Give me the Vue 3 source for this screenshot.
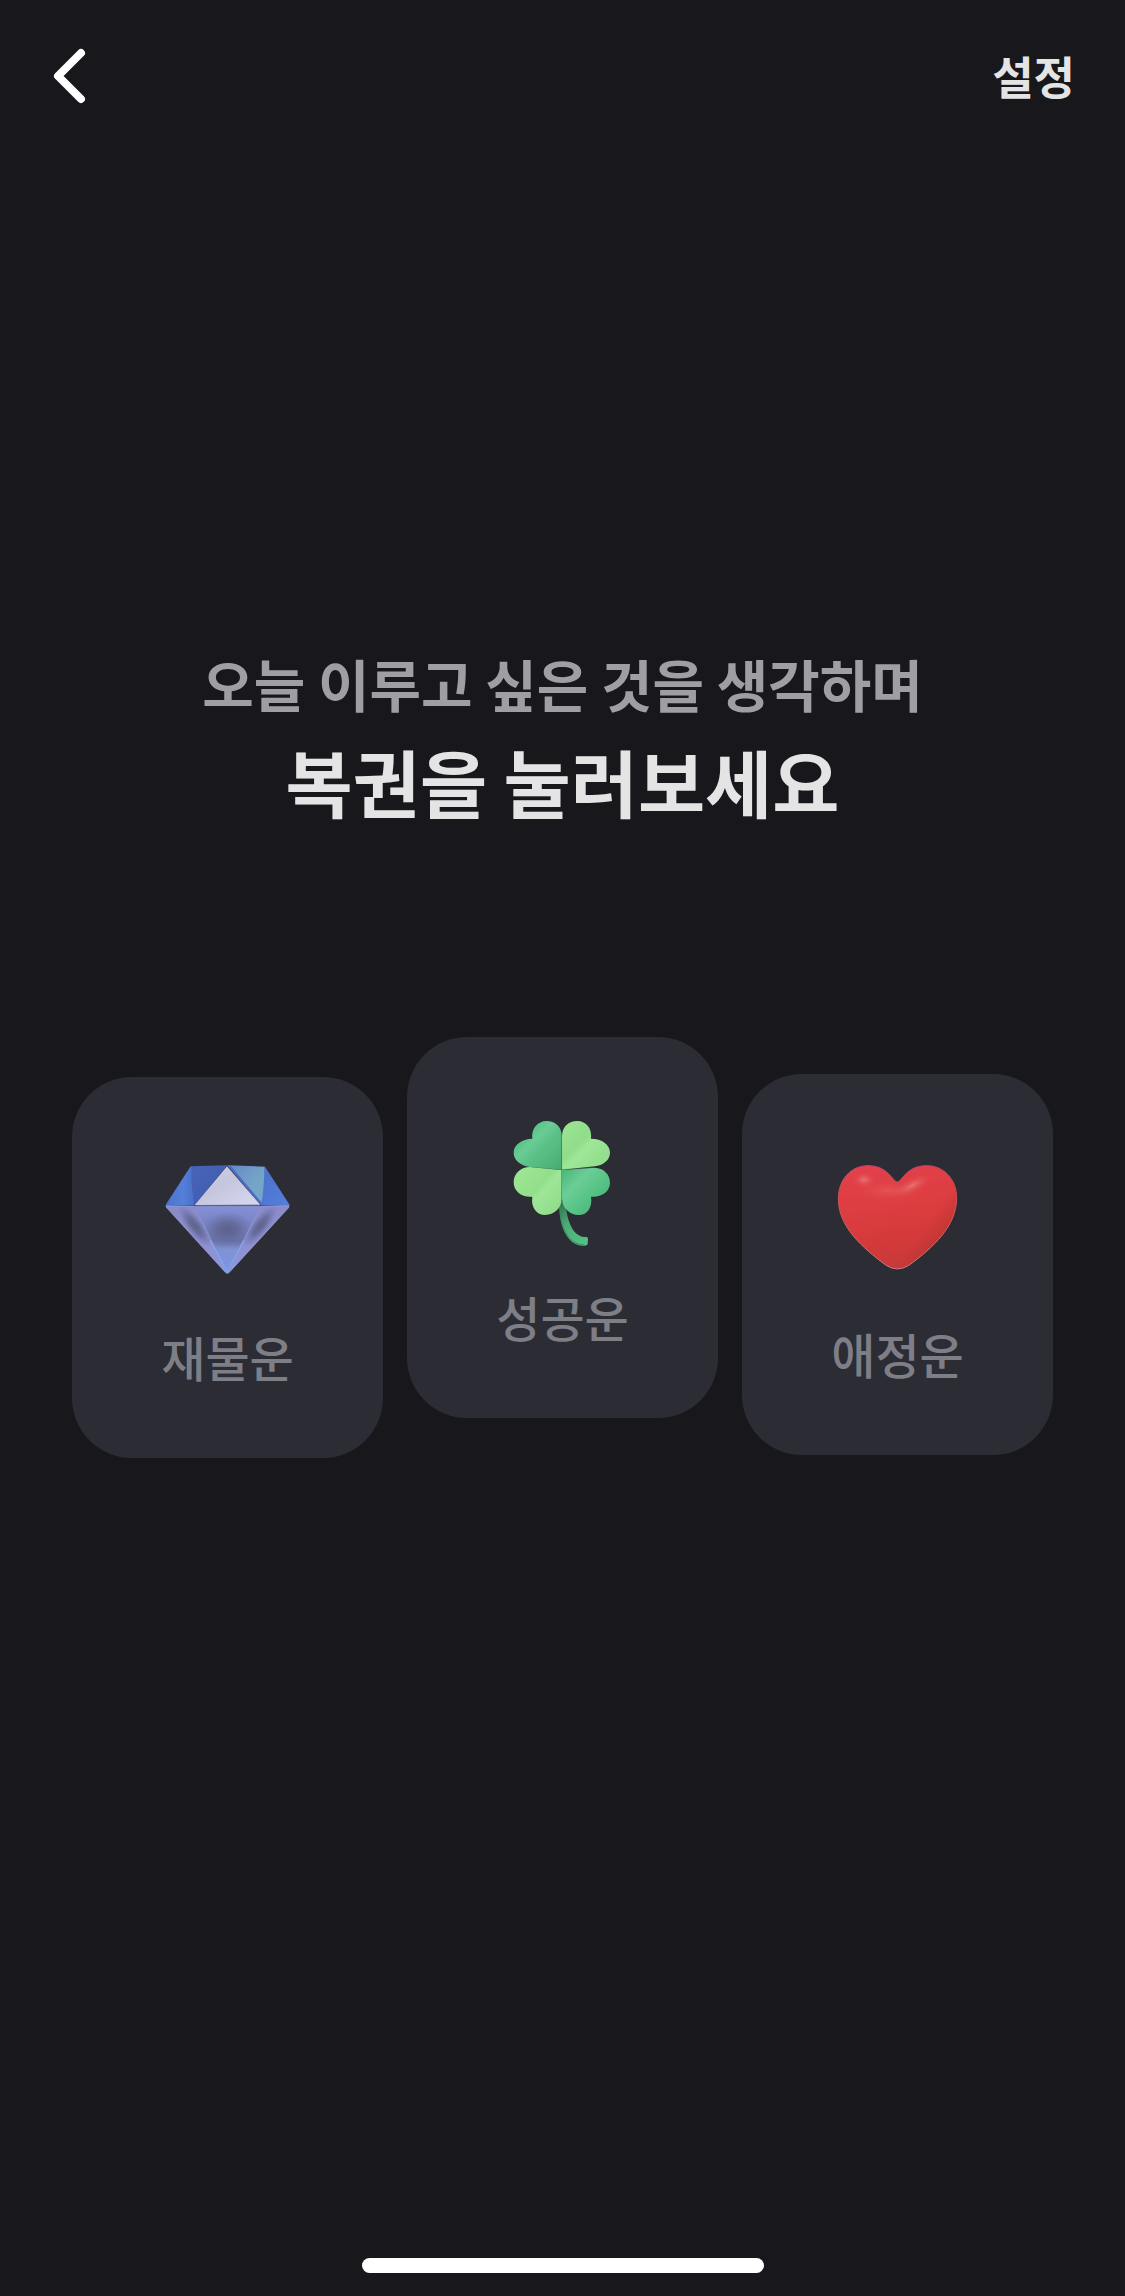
<script setup>
const fortunes = [
  { id: 'wealth', label: '재물운' },
  { id: 'success', label: '성공운' },
  { id: 'love', label: '애정운' },
]
</script>

<template>
  <div class="screen">
    <header class="bar">
      <button class="back" type="button" aria-label="뒤로">
        <svg viewBox="0 0 36 56" aria-hidden="true">
          <path d="M31 5 8 28 31 51" />
        </svg>
      </button>
      <button class="settings" type="button">설정</button>
    </header>

    <main class="content">
      <p class="lead">오늘 이루고 싶은 것을 생각하며</p>
      <h1 class="title">복권을 눌러보세요</h1>

      <div class="cards">
        <button v-for="f in fortunes" :key="f.id" type="button" class="card" :class="f.id">
          <svg v-if="f.id === 'wealth'" class="icon" viewBox="66 51 393 393" aria-hidden="true">
            <defs>
              <linearGradient id="d-left" x1="0" y1="0" x2="1" y2="0">
                <stop offset="0" stop-color="#4a72cc" />
                <stop offset=".6" stop-color="#5580d8" />
                <stop offset="1" stop-color="#476ec8" />
              </linearGradient>
              <linearGradient id="d-right" x1="0" y1="0" x2="1" y2="1">
                <stop offset="0" stop-color="#4a70c8" />
                <stop offset="1" stop-color="#5580dc" />
              </linearGradient>
              <linearGradient id="d-navy" x1="0" y1="0" x2="1" y2="1">
                <stop offset="0" stop-color="#4565b8" />
                <stop offset="1" stop-color="#4259ae" />
              </linearGradient>
              <linearGradient id="d-teal" x1="0" y1="0" x2="1" y2="1">
                <stop offset="0" stop-color="#6288cc" />
                <stop offset=".6" stop-color="#76a5c6" />
                <stop offset="1" stop-color="#74a6cc" />
              </linearGradient>
              <linearGradient id="d-white" x1="0" y1="0" x2="1" y2="1">
                <stop offset="0" stop-color="#d0cee4" />
                <stop offset=".45" stop-color="#c5c6de" />
                <stop offset="1" stop-color="#d6d9f0" />
              </linearGradient>
              <linearGradient id="d-mid" x1="0" y1="0" x2="0" y2="1">
                <stop offset="0" stop-color="#8590d6" />
                <stop offset=".3" stop-color="#7882c0" />
                <stop offset=".52" stop-color="#6a74a8" />
                <stop offset=".64" stop-color="#7e92d4" />
                <stop offset="1" stop-color="#8096e2" />
              </linearGradient>
              <radialGradient id="d-shade">
                <stop offset="0" stop-color="#5d628c" />
                <stop offset=".4" stop-color="#5f6592" stop-opacity=".8" />
                <stop offset="1" stop-color="#6872b0" stop-opacity="0" />
              </radialGradient>
              <linearGradient id="d-low" x1="0" y1="0" x2="0" y2="1">
                <stop offset="0" stop-color="#8c8bc8" />
                <stop offset=".5" stop-color="#8f8fcc" />
                <stop offset="1" stop-color="#8d97e0" />
              </linearGradient>
              <clipPath id="d-low-left"><path d="M76 198H164L262 402Q258 402 254 397L78 203Z" /></clipPath>
              <clipPath id="d-low-right"><path d="M449 198H362L262 402Q266 402 270 397L447 204Z" /></clipPath>
              <clipPath id="d-center"><path d="M164 198H362L262 402Z" /></clipPath>
            </defs>
            <path fill="url(#d-left)" d="M150 82Q152 79 156 79L164 195 78 198Q75 197 78 193Z" />
            <path fill="url(#d-right)" d="M371 79Q375 80 377 83L449 195Q450 198 446 199L362 195Z" />
            <path fill="url(#d-navy)" d="M154 79 262 76 164 195Q153 150 154 79Z" />
            <path fill="url(#d-teal)" d="M262 76 373 80Q373 140 364 192Z" />
            <path fill="#4a6cc6" d="M262 76 272 77 367 190 362 195Z" />
            <path fill="url(#d-white)" d="M261 79 361 194 164 195Z" />
            <g clip-path="url(#d-low-left)">
              <path fill="url(#d-low)" d="M76 198H164L262 402Q258 402 254 397L78 203Z" />
              <ellipse cx="165" cy="258" rx="78" ry="26" fill="url(#d-shade)" transform="rotate(52 165 258)" />
            </g>
            <g clip-path="url(#d-low-right)">
              <path fill="url(#d-low)" d="M449 198H362L262 402Q266 402 270 397L447 204Z" />
              <ellipse cx="360" cy="258" rx="78" ry="26" fill="url(#d-shade)" transform="rotate(-52 360 258)" />
            </g>
            <g clip-path="url(#d-center)">
              <path fill="url(#d-mid)" d="M164 198H362L262 402Z" />
              <ellipse cx="262" cy="268" rx="78" ry="54" fill="url(#d-shade)" />
            </g>
            <path fill="none" stroke="#8c9bdc" stroke-width="3" d="M164 198 262 400 362 198" />
            <path fill="none" stroke="#84a6ec" stroke-width="4" stroke-linejoin="round" d="M211 302 262 397 311 302" />
            <path fill="none" stroke="#686d9c" stroke-width="3" d="M166 197H360" />
            <path fill="none" stroke="#8daaf0" stroke-width="2" d="M78 198H164M362 198H447" />
          </svg>

          <svg v-else-if="f.id === 'success'" class="icon" viewBox="51 51 393 393" aria-hidden="true">
            <defs>
              <linearGradient id="c-dark" gradientUnits="userSpaceOnUse" x1="125" y1="90" x2="240" y2="205">
                <stop offset="0" stop-color="#50be82" />
                <stop offset=".15" stop-color="#5ac589" />
                <stop offset=".3" stop-color="#6bcb95" />
                <stop offset=".5" stop-color="#5ac287" />
                <stop offset="1" stop-color="#4bac70" />
              </linearGradient>
              <linearGradient id="c-light" gradientUnits="userSpaceOnUse" x1="255" y1="100" x2="340" y2="190">
                <stop offset="0" stop-color="#98e290" />
                <stop offset=".42" stop-color="#90dd8a" />
                <stop offset=".6" stop-color="#9fe699" />
                <stop offset="1" stop-color="#94e08e" />
              </linearGradient>
              <linearGradient id="c-light-low" gradientUnits="userSpaceOnUse" x1="130" y1="230" x2="230" y2="320">
                <stop offset="0" stop-color="#9ae492" />
                <stop offset=".4" stop-color="#92df8b" />
                <stop offset=".55" stop-color="#9fe698" />
                <stop offset="1" stop-color="#91de8a" />
              </linearGradient>
              <linearGradient id="c-dark-low" gradientUnits="userSpaceOnUse" x1="250" y1="215" x2="355" y2="320">
                <stop offset="0" stop-color="#4db87a" />
                <stop offset=".35" stop-color="#6ccd97" />
                <stop offset=".65" stop-color="#5ac587" />
                <stop offset="1" stop-color="#4bb77f" />
              </linearGradient>
              <linearGradient id="c-stem" gradientUnits="userSpaceOnUse" x1="245" y1="310" x2="310" y2="430">
                <stop offset="0" stop-color="#35754e" />
                <stop offset=".45" stop-color="#4bab75" />
                <stop offset="1" stop-color="#54c184" />
              </linearGradient>
            </defs>
            <path fill="url(#c-stem)" d="M238 305H257C258 345 272 408 314 411Q323 409 324 416L323 433Q321 438 309 437C258 435 235 370 238 305Z" />
            <path fill="none" stroke="#368863" stroke-width="3" d="M240 320C239 375 262 433 313 435" />
            <path fill="url(#c-dark)" d="M245 209V107C245 80 225 63 200 63 172 63 153 87 157 116 125 117 101 134 101 158 101 181 122 196 148 201Z" />
            <path fill="url(#c-light)" d="M246 209V107C247 80 266 63 291 63 320 63 337 87 333 116 366 116 390 134 390 158 390 181 368 196 344 199Z" />
            <path fill="url(#c-light-low)" d="M245 210V298C244 325 222 345 196 345 169 345 152 321 157 290 126 293 101 275 101 247 101 219 123 201 150 201Z" />
            <path fill="url(#c-dark-low)" d="M246 210V298C248 326 270 345 296 345 323 345 338 321 333 290 363 293 390 275 390 248 390 222 370 204 344 203Z" />
            <path fill="none" stroke="#3a9460" stroke-width="2" opacity=".4" d="M245 105V310M155 201 245 209 340 202" />
          </svg>

          <svg v-else class="icon" viewBox="66 42 393 393" aria-hidden="true">
            <defs>
              <linearGradient id="h-body" x1=".4" y1="0" x2=".6" y2="1">
                <stop offset="0" stop-color="#e2404a" />
                <stop offset=".35" stop-color="#dd3e41" />
                <stop offset=".7" stop-color="#d43a3a" />
                <stop offset="1" stop-color="#c6393b" />
              </linearGradient>
              <linearGradient id="h-rim" x1="0" y1="0" x2="0" y2="1">
                <stop offset="0" stop-color="#c94468" />
                <stop offset=".3" stop-color="#c95055" />
                <stop offset="1" stop-color="#c77880" />
              </linearGradient>
              <linearGradient id="h-edge" gradientUnits="userSpaceOnUse" x1="345" y1="265" x2="405" y2="310">
                <stop offset="0" stop-color="#ba3230" stop-opacity="0" />
                <stop offset="1" stop-color="#b8332f" stop-opacity=".8" />
              </linearGradient>
              <radialGradient id="h-glow">
                <stop offset="0" stop-color="#ec7d7b" stop-opacity=".85" />
                <stop offset=".5" stop-color="#e66261" stop-opacity=".4" />
                <stop offset="1" stop-color="#e04448" stop-opacity="0" />
              </radialGradient>
            </defs>
            <path fill="url(#h-body)" d="M262 126C276 126 287 77 350 77 403 77 440 120 440 173 440 260 368 323 298 375Q262 399 227 375C157 323 85 260 85 177 85 119 122 77 174 77 236 77 248 126 262 126Z" />
            <path fill="url(#h-edge)" d="M350 77C403 77 440 120 440 173 440 260 368 323 298 375Q262 399 227 375Z" />
            <ellipse cx="162" cy="119" rx="36" ry="26" fill="url(#h-glow)" />
            <ellipse cx="306" cy="137" rx="68" ry="24" fill="url(#h-glow)" transform="rotate(-28 306 137)" />
            <ellipse cx="235" cy="152" rx="110" ry="34" fill="url(#h-glow)" opacity=".4" />
            <path fill="none" stroke="url(#h-rim)" stroke-width="3" d="M262 126C276 126 287 77 350 77 403 77 440 120 440 173 440 260 368 323 298 375Q262 399 227 375C157 323 85 260 85 177 85 119 122 77 174 77 236 77 248 126 262 126Z" />
          </svg>
          <span class="label">{{ f.label }}</span>
        </button>
      </div>
    </main>

    <div class="home-indicator"></div>
  </div>
</template>

<style>
body {
  margin: 0;
  background: #17171c;
}
</style>

<style scoped>
.screen {
  box-sizing: border-box;
  min-height: 100vh;
  display: flex;
  flex-direction: column;
  background: #17171c;
  font-family: "Noto Sans CJK KR", "Noto Sans", sans-serif;
}

button {
  margin: 0;
  padding: 0;
  border: 0;
  background: none;
  font-family: inherit;
  cursor: pointer;
}

.bar {
  display: flex;
  align-items: center;
  justify-content: space-between;
  height: 152px;
  padding: 0 50px;
}

.back {
  display: flex;
}

.back svg {
  width: 36px;
  height: 56px;
  fill: none;
  stroke: #fff;
  stroke-width: 8;
  stroke-linecap: round;
  stroke-linejoin: round;
}

.settings {
  color: #e4e4e5;
  font-size: 45px;
  font-weight: 700;
  line-height: 64px;
}

.content {
  flex: 1;
  padding: 488px 72px 0;
  text-align: center;
}

.lead {
  margin: 0;
  color: #9e9ea4;
  font-size: 56px;
  font-weight: 700;
  line-height: 86px;
}

.title {
  margin: 0;
  color: #e4e4e5;
  font-size: 73px;
  font-weight: 700;
  line-height: 108px;
}

.cards {
  display: grid;
  grid-template-columns: repeat(3, 1fr);
  align-items: start;
  gap: 24px;
  margin-top: 203px;
}

.card {
  display: flex;
  flex-direction: column;
  align-items: center;
  gap: 32px;
  padding: 80px 0 66px;
  border-radius: 60px;
  background: #2c2c35;
}

.wealth {
  margin-top: 40px;
}

.love {
  margin-top: 37px;
}

.icon {
  width: 131px;
  height: 131px;
}

.label {
  color: #7e7e87;
  font-size: 48px;
  font-weight: 500;
  line-height: 72px;
}

.home-indicator {
  align-self: center;
  width: 402px;
  height: 15px;
  margin-bottom: 23px;
  border-radius: 8px;
  background: #fff;
}
</style>
